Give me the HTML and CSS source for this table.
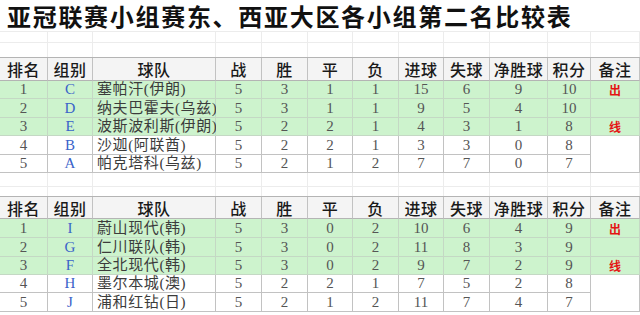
FILE: index.html
```html
<!DOCTYPE html>
<html>
<head>
    <meta charset="utf-8">
    <meta name="viewport" content="width=device-width, initial-scale=1.0">
    <link rel="stylesheet" href="styles.css">
</head>
<body>
    <div class="sheet">
        <div class="title-row">
            <h1 class="title">亚冠联赛小组赛东、西亚大区各小组第二名比较表</h1>
        </div>
        <div class="blank b1"><span></span><span></span><span></span><span></span><span></span><span></span><span></span><span></span><span></span><span></span><span></span><span></span></div>
        <div class="blank b2"><span></span><span></span><span></span><span></span><span></span><span></span><span></span><span></span><span></span><span></span><span></span><span></span></div>

        <div class="table t1">
            <div class="tr head">
                <div>排名</div><div>组别</div><div>球队</div><div>战</div><div>胜</div><div>平</div><div>负</div><div>进球</div><div>失球</div><div>净胜球</div><div>积分</div><div>备注</div>
            </div>
            <div class="tr win">
                <div>1</div><div class="grp">C</div><div class="team">塞帕汗(伊朗)</div><div>5</div><div>3</div><div>1</div><div>1</div><div>15</div><div>6</div><div>9</div><div>10</div><div class="note">出</div>
            </div>
            <div class="tr win">
                <div>2</div><div class="grp">D</div><div class="team">纳夫巴霍夫(乌兹)</div><div>5</div><div>3</div><div>1</div><div>1</div><div>9</div><div>5</div><div>4</div><div>10</div><div class="note"></div>
            </div>
            <div class="tr win">
                <div>3</div><div class="grp">E</div><div class="team">波斯波利斯(伊朗)</div><div>5</div><div>2</div><div>2</div><div>1</div><div>4</div><div>3</div><div>1</div><div>8</div><div class="note">线</div>
            </div>
            <div class="tr">
                <div>4</div><div class="grp">B</div><div class="team">沙迦(阿联酋)</div><div>5</div><div>2</div><div>2</div><div>1</div><div>3</div><div>3</div><div>0</div><div>8</div><div class="merged"></div>
            </div>
            <div class="tr">
                <div>5</div><div class="grp">A</div><div class="team">帕克塔科(乌兹)</div><div>5</div><div>2</div><div>1</div><div>2</div><div>7</div><div>7</div><div>0</div><div>7</div>
            </div>
        </div>

        <div class="blank b3"><span></span><span></span><span></span><span></span><span></span><span></span><span></span><span></span><span></span><span></span><span></span><span></span></div>
        <div class="blank b4"><span></span><span></span><span></span><span></span><span></span><span></span><span></span><span></span><span></span><span></span><span></span><span></span></div>

        <div class="table t2">
            <div class="tr head">
                <div>排名</div><div>组别</div><div>球队</div><div>战</div><div>胜</div><div>平</div><div>负</div><div>进球</div><div>失球</div><div>净胜球</div><div>积分</div><div>备注</div>
            </div>
            <div class="tr win">
                <div>1</div><div class="grp">I</div><div class="team">蔚山现代(韩)</div><div>5</div><div>3</div><div>0</div><div>2</div><div>10</div><div>6</div><div>4</div><div>9</div><div class="note">出</div>
            </div>
            <div class="tr win">
                <div>2</div><div class="grp">G</div><div class="team">仁川联队(韩)</div><div>5</div><div>3</div><div>0</div><div>2</div><div>11</div><div>8</div><div>3</div><div>9</div><div class="note"></div>
            </div>
            <div class="tr win">
                <div>3</div><div class="grp">F</div><div class="team">全北现代(韩)</div><div>5</div><div>3</div><div>0</div><div>2</div><div>9</div><div>7</div><div>2</div><div>9</div><div class="note">线</div>
            </div>
            <div class="tr">
                <div>4</div><div class="grp">H</div><div class="team">墨尔本城(澳)</div><div>5</div><div>2</div><div>2</div><div>1</div><div>7</div><div>5</div><div>2</div><div>8</div><div class="merged"></div>
            </div>
            <div class="tr">
                <div>5</div><div class="grp">J</div><div class="team">浦和红钻(日)</div><div>5</div><div>2</div><div>1</div><div>2</div><div>11</div><div>7</div><div>4</div><div>7</div>
            </div>
        </div>
    </div>
</body>
</html>
```

FILE: styles.css
```css
body {
    margin: 0;
    background: #fff;
    font-family: "Liberation Serif", "Noto Sans CJK SC", serif;
    color: #555;
}

.sheet {
    width: 640px;
}

.title-row {
    height: 31px;
    display: flex;
    align-items: center;
    border-bottom: 1px solid #ececec;
}

.title {
    margin: 0;
    padding-left: 7px;
    font: 700 24px/1.4 "Noto Sans CJK SC", sans-serif;
    letter-spacing: 1.7px;
    color: #111;
    white-space: nowrap;
}

.blank,
.table {
    display: grid;
    grid-template-columns: 48px 45px 123px 46px 46px 45px 46px 45px 46px 58px 43px 49px;
}

.blank span {
    border-right: 1px solid #ececec;
}

.b1 { height: 11px; }
.b1 span { border-bottom: 1px solid #ececec; }
.b2 { height: 14px; }
.b3 { height: 14px; }
.b3 span { border-bottom: 1px solid #ececec; }
.b4 { height: 9px; }

.table {
    border-top: 1px solid #b4b4b4;
}

.t1 { grid-template-rows: 23px 18px 19px 18px 19px 18px; }
.t2 { grid-template-rows: 22px 19px 19px 18px 18px 19px; }

.tr {
    display: contents;
}

.tr > div {
    box-sizing: border-box;
    display: flex;
    align-items: center;
    justify-content: center;
    border-right: 1px solid #c2c2c2;
    border-bottom: 1px solid #c2c2c2;
    font-size: 15px;
    line-height: 1;
    white-space: nowrap;
}

.head > div {
    background: #f4f4f4;
    border-bottom-color: #b4b4b4;
    font: 500 16px "Noto Sans CJK SC", sans-serif;
    color: #1a1a1a;
    letter-spacing: 0.5px;
}

.win > div {
    background: #cdf3cd;
    border-color: #c4d8c4;
}

.grp {
    color: #3a63c9;
}

.tr > .team {
    justify-content: flex-start;
    padding-left: 4px;
    color: #3c3c3c;
    letter-spacing: 0.6px;
}

.tr > .note {
    font: 700 12px "Noto Sans CJK SC", sans-serif;
    color: #e41414;
}

.merged {
    grid-row: span 2;
}
```
